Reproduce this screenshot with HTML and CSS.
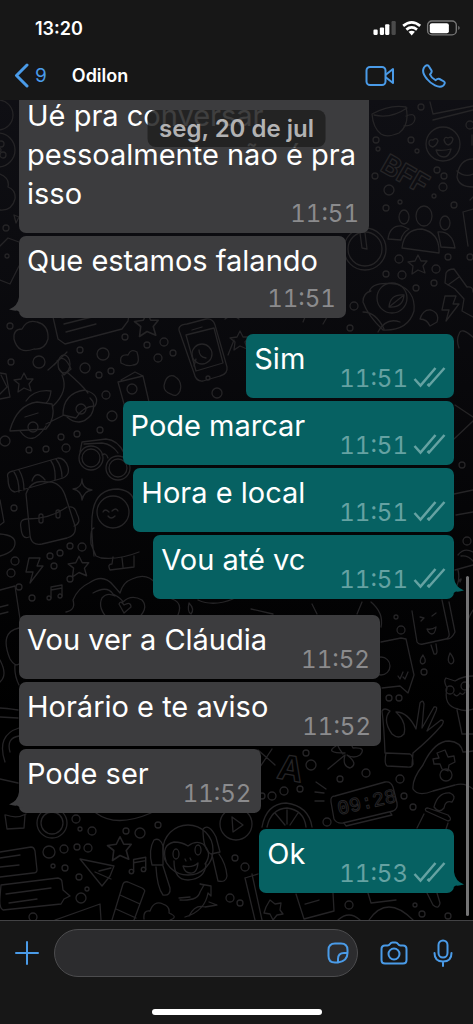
FILE: index.html
```html
<!DOCTYPE html>
<html lang="pt-BR">
<head>
<meta charset="utf-8">
<meta name="viewport" content="width=device-width, initial-scale=1">
<title>Odilon</title>
<link rel="stylesheet" href="styles.css">
</head>
<body>
<svg class="defs" aria-hidden="true">
  <symbol id="ticks" viewBox="0 0 33 22"><path d="M1.500 13l6 6.500L22.500 2M14.500 18l1.500 1.500L31.500 2" /></symbol>
  <symbol id="tail" viewBox="0 0 14 18"><path d="M14 0H10Q9 9 0 12.500Q5 14 8 13.500Q10 15 14 16z" /></symbol>
  <symbol id="star" viewBox="-12 -12 24 24"><path d="M0-9l3 6 6 0-4 5 2 7-7-3-6 4 1-8-5-4 7-1z" /></symbol>
  <symbol id="bolt" viewBox="-12 -14 24 28"><path d="M-5-12H6L3-4H9L-4 13-1 2H-8z" /></symbol>
  <symbol id="note" viewBox="-10 -10 20 20"><path d="M-4 6V-5L7-7V4M-4-2L7-4" /><circle cx="-6" cy="6" r="2" /><circle cx="5" cy="4" r="2" /></symbol>
</svg>
<div class="screen">
  <header class="top">
    <div class="status">
      <span class="clock">13:20</span>
      <svg class="status-icons" viewBox="0 0 82 16" aria-hidden="true">
        <g fill="#fff"><rect x="0" y="9" width="4" height="5" rx="1" /><rect x="6" y="7" width="4" height="7" rx="1" /><rect x="11" y="4" width="4" height="10" rx="1" /></g>
        <rect x="17" y="1" width="4" height="13" rx="1" fill="#4a4a4a" />
        <g fill="none" stroke="#fff" stroke-width="2.6"><path d="M28 5.500Q36-1 44 5.500" /><path d="M31 9Q36 5 41 9" /></g>
        <path d="M33 11Q36 9 39 11L36 14.500z" fill="#fff" />
        <rect x="51" y="1" width="27" height="13" rx="4" fill="none" stroke="#777" stroke-width="1.300" />
        <rect x="53" y="3" width="18" height="9.500" rx="2" fill="#fff" /><path d="M80 5.500q2 2 0 4z" fill="#999" />
      </svg>
    </div>
    <nav class="nav">
      <button class="back" aria-label="Voltar, 9 conversas">
        <svg width="15" height="25" viewBox="0 0 15 25"><path d="M13 2L2.500 12.500 13 23" stroke-width="3" /></svg><span>9</span>
      </button>
      <h1 class="name">Odilon</h1>
      <button class="icon" aria-label="Chamada de vídeo"><svg width="30" height="22" viewBox="0 0 30 22"><rect x="1.500" y="2" width="19" height="18" rx="3.500" /><path d="M21 9.500L28 4v14l-7-5.500" /></svg></button>
      <button class="icon" aria-label="Ligar"><svg width="24" height="24" viewBox="0 0 24 24"><path d="M2 3.500C4 1 6 .5 7 2.500l2.500 4c.8 1.500-.2 2.500-1.500 4 1 2.500 3 4.500 5.500 5.700 1.500-1.300 2.500-2 4-1.200l4.500 2.500c1.500 1 .5 3-1 4.300C17 25 9 20 5 15 1.500 11 .3 6.500 2 3.500z" /></svg></button>
    </nav>
  </header>

  <main class="chat">
    <svg class="wallpaper" viewBox="0 100 473 820" preserveAspectRatio="xMidYMin slice" aria-hidden="true">
      <g>
        <!-- top right: cup, smiley, letters, people -->
        <path d="M372 114q18-10 34-7 4 18-7 26-12 5-18 1-8-6-9-20zM374 115q17 4 33-7M406 116q9-4 9 3-1 7-11 7M430 102l3 12 40-8M433 120l40-10" />
        <circle cx="443" cy="144" r="17" /><path d="M429 143q0-4 4-3 4-3 5 1-1 4-5 6-4-1-4-4zM444 140q1-4 4-2 4-2 5 1-1 5-5 6-3-1-4-5zM436 150q8 1 15-1-2 8-7 8-6 0-8-7z" />
        <text class="letters" transform="translate(379 170) rotate(30)">BFF</text>
        <path d="M457 177q2-18 16-18M457 177q2 10 16 10M457 171q8 7 16 3" />
        <ellipse cx="424" cy="216" rx="8" ry="10" /><ellipse cx="404" cy="217" rx="5" ry="7" /><ellipse cx="445" cy="223" rx="5" ry="7" />
        <path d="M402 248q2-19 20-19 18 4 17 24zM388 239q2-14 14-13l7 3q-7 4-8 11zM438 232q14-1 17 16l-14-1zM463 212l10-3M463 212l5 34M470 200l3-3" />
        <circle cx="365" cy="249" r="21" /><circle cx="365" cy="249" r="17" /><path d="M360 233l2 15 5 1-2-16" />
        <path d="M371 291q-8 2-8 11 5 14 20 28 25 1 31-19 2-21-18-27-24-3-27 8zM363 312q13 0 21 17" /><circle cx="392" cy="298" r="15" /><path d="M389 307q1-13 15-12-1 13-15 12zl15-12" />
        <path d="M446 273q2-4 8-4l13 18q6-1 6 5M446 273l-1 10 10 6 9 10-2 12 11 6M448 285l11-8M420 319q3-10 11-9 9 3 6 12l-7 4q-3-7-10-7z" />
        <use href="#star" x="406" y="252" width="24" height="24" /><use href="#bolt" x="438" y="294" width="24" height="28" />
        <!-- left edge top -->
        <circle cx="-2" cy="115" r="15" /><circle cx="-2" cy="150" r="17" /><circle cx="1" cy="144" r="3" /><circle cx="3" cy="155" r="3" /><circle cx="-1" cy="150" r="2" /><path d="M0 174q10 4 8 13 8 3 7 12-3 12-15 11M14 215l5 2-3 6zM0 246l8-8 11 4M0 280l10 4 9-18" />
        <path d="M14 339q-1-10 8-10 5-10 15-7 12 3 11 17-3 11-14 10-16 6-20-10zM53 317l5 22 7 5 57-15 6-8 2-13M64 324l32-8M66 332l30-8M62 318l20-4" />
        <use href="#star" x="132" y="309" width="30" height="30" /><use href="#star" x="12" y="370" width="24" height="24" /><use href="#star" x="228" y="328" width="24" height="24" />
        <!-- scooter -->
        <path d="M48 370q6-5 17-16M54 365l13-13M57 361q7-8 14 8l-7 6-5-6M68 373q14 12 20 20M62 375q7 16-9 31M63 415q0-22 22-25 16 5 10 16-12 0-19 12zM10 430q7-25 27-28l15 2q4 14-6 25l-36 2zM26 401q8-12 25-10-1 9-5 12M25 417l13-4M46 424l18-9" /><ellipse cx="64" cy="364" rx="6" ry="9" />
        <path d="M67 417q13 11 24-2 6-11-1-17M20 431q12 17 26-5" /><circle cx="81" cy="409" r="5" /><circle cx="33" cy="427" r="5" />
        <path d="M121 363q-2-9 7-8 3-7 9-3 4 13-4 13-5 2-12-2zM118 382l25-6 6 26M118 382l9 33M121 380l14-8 8 4M0 373l6 1 4 23-10 2M1 375l6 12-7 7" /><circle cx="132" cy="389" r="5" />
        <path d="M180 333q-4-8 7-9l19-5q7-1 9 6l12 42q1 7-7 9l-17 5q-7 1-9-8zM186 335l28-7 9 35-27 8zM192 330l10-3" /><circle cx="202" cy="354" r="10" /><path d="M194 366l2-7M199 350q0 7 7 8" /><circle cx="208" cy="378" r="2" />
        <path d="M164 386q2-12 10-10 9 5 6 15-3 7-9 3-7-2-7-8zM474 338q-13-12-15-4-3 6 0 14M455 405l18 12M454 439l19-18" />
        <!-- sunglasses -->
        <circle cx="91" cy="458" r="12" /><circle cx="91" cy="458" r="9" /><circle cx="118" cy="468" r="12" /><circle cx="118" cy="468" r="9" /><path d="M80 452l2-10 24-3q12 1 18 14M84 444l18-1q10 1 16 10M102 455q4-3 6 3" />
        <!-- backpack -->
        <path d="M8 478q-2-6 5-7l45-13q7 0 10 9 2 8-5 11l-48 14q-7-1-7-14zM14 472q5 7 5 20M19 470q5 8 5 20M51 461q5 7 4 19M56 459q6 8 6 18M26 494q5-15 21-12 14-1 19 16l9 28q2 9-8 12l-25 6q-11 2-12-9zM27 519q23 0 40-12M69 507q6-1 8 7 5 9-3 12M27 519q-8 0-6 9 1 12 8 9M32 481q4-12 13-1" /><rect x="39" y="514" width="4" height="9" rx="2" /><rect x="56" y="510" width="4" height="8" rx="2" />
        <path d="M82 479q0 10 10 11-8 1-10 10 0-9-9-11 9-1 9-10z" />
        <!-- astronaut -->
        <path d="M94 556q-4-31-1-46 4-21 25-21 18 2 17 20M94 528q-4 1-3 16l5 12 5 2q18 2 38-6M113 557l-1 7q-5 0-2 6l24-3 0-11M122 558l1 9" /><circle cx="113" cy="512" r="16" /><path d="M103 512q2-4 6 0M112 511q4-4 6 0M108 516q3 4 7 0" />
        <path d="M0 500l4 22-4 3M0 534q15 1 15 9 0 9-15 13M0 590l15-4 5 33M0 607l8-2M0 614l8-2" />
        <use href="#bolt" x="22" y="556" width="24" height="28" /><use href="#star" x="66" y="553" width="26" height="26" /><use href="#note" x="45" y="582" width="20" height="20" />
        <path d="M66 612q10-2 7-12 5-12 16-17 14-10 24 2l7 8q3-11 12-14 15-7 24 5 12-1 16 15 12 4 5 18l-8 9M93 593q14-8 20 1 8 4 10 8 8-8 19-2 8 9-7 21l-12 9-14-10q-12-12-7-22 5-6 13-2M119 604q2-4 5 1 7-4 7 2l-7 6zM189 603q6 6 2 11-4-2-2-11M198 600q15 7 35-1" />
        <path d="M458 555q6-8 15-3M455 570l18-5M456 515l17-3M454 494l19-4M461 556q7-1 12 5M458 570q2 8-1 16M458 582q5-6 2 0" />
        <!-- right middle: ice cream, chat sticker, cat, hand -->
        <path d="M412 611l5 31q2 3 6 2l23-5q4-2 3-6l-7-33M449 602l6 30q-4 8-9 7M431 645l3 9q3 1 3-3l-1-7M420 617l4 1-3 3M432 616l4-3M427 629q5 1 9-2-1 7-4 7-3 0-5-5zM371 602q13 11 10 25M381 642l20-4 5 1 8 36-2 6-4 12-8-7-18 2M423 655q5 8-1 9-4-2 1-9zM450 653q7 9 1 11-5-2-1-11z" /><circle cx="381" cy="666" r="9" /><path d="M398 676l2 3 3-7M403 677l2 2 3-7" />
        <path d="M473 676q-10 0-18 5l-9-3q-3 3 1 10-4 18 11 21 7 3 15 0M457 710l5 24h11M473 610q-8 12-5 20" /><circle cx="450" cy="690" r="4" /><circle cx="465" cy="686" r="4" /><path d="M454 694q3 4 6-1 3 3 5-1" />
        <path d="M385 753q-1-27-3-42 2-4 8 0-8 9 2 23 7 6 12 0 3-12-8-22 12 0 20 17l4-26q3-4 4 1l-2 24 12-21q4-1 2 4l-9 20 14-11q4 0 1 5-12 14-29 28l-1 12M386 753l24 1q3 1 3 10-1 4-6 3l-20-1q-3-2-1-13z" />
        <path d="M413 789q-1-10 10-24 11-24 26-24 12 1 14 11 5 0 10-1M413 789q5 8 20 2l22-6q10-3 18 4M437 753l8-3 3 7 6-1 1 6-6 3-1 6-6-2-2-5-6 0-1-5 6-1z" /><circle cx="446" cy="775" r="6" />
        <!-- below the bubbles -->
        <text class="letters big" transform="translate(276 778) rotate(10)">A</text><path d="M258 750q15 13 17 15M260 767l12-18M343 754q-11-15 0-9 3-12 10 3 14-1 7 7-6 4-13 0 12 9 3 13-8-2-5-13l-17 14M345 753q-21 0-9-7M316 782l10 7M315 792l9 1M315 801h9" />
        <path d="M335 796q-5 0-4 6l3 17q3 5 9 4l50-12q5-2 4-8l-4-16q-2-6-8-5zM344 823l2 3 46-11-2-3" /><text class="digits" transform="translate(339 815) rotate(-13)">09:28</text>
        <path d="M434 807q4-15 16-14 7 3 2 9-7-2-8 6-5 6-10-1zM426 811l22 10q5-1 0-6l-20-7q-4 0-2 3zM424 814l-7 14M448 823l-2 6M262 827q4-23 24-24 23 3 26 24M267 827q4-18 20-19 17 2 19 19M287 810v14M275 813l10 12M298 813l-8 12" />
        <circle cx="52" cy="823" r="15" /><circle cx="52" cy="823" r="11" /><path d="M48 808l1-6 7 1v5M5 815l2 14 17-1 1-13M6 815q11 4 20-1M96 813q20 15 55 0M0 708q5 0 18 2M0 717l18 1M5 762q-9-27 14-34M10 752q-4-14 9-16M0 779l18 4M19 628q-20 4-9 31 5 8 9 5M15 665q-1 10 4 20M0 660q8 15 0 22" />
        <circle cx="236" cy="824" r="16" /><path d="M232 817l11 8-10 7z" />
        <!-- monkey -->
        <circle cx="188" cy="850" r="25" /><path d="M166 861q-5-16 8-19 8 0 14 4 8-6 15-2 10 9 2 20M174 861q0 19 14 19 17-1 18-16M183 866q10 2 15-3-1 11-8 10-5 0-7-7zM185 859l1 2M190 858l1 2" /><ellipse cx="176" cy="854" rx="3" ry="5" /><ellipse cx="198" cy="850" rx="3" ry="5" /><path d="M163 846q-3-9-9-6-6 10-2 25l11 0zM156 867q1 20 7 28 8 1 7-7l-7-22M203 829q6-6 13 8l4 15-9 2q-8-4-8-25M212 855l6 26q8 2 9-5-1-12-8-22" />
        <use href="#star" x="105" y="833" width="30" height="30" /><use href="#note" x="127" y="854" width="22" height="22" /><path d="M80 859l34 7-4 10-8 10zM95 872l16 7M99 871l12-3" />
        <path d="M0 852l31-5q3 0 4 4l2 19q0 3-4 3l-33 4M0 858l20-3M0 867l19-2M1 885l57-7q4 1 4 4l1 8 7 6-6 3-3 5-58 6q-4-2-3-13zM6 894l45-6M9 903l28-4M55 920l45-16 1 16M112 920l11-36q1-3 5-2l14 6q4 2 2 5l-10 27M120 895l20 9M116 909l20 9M180 900q18 1 20-8l4-7-4-1 11 2v10l-3-3q-3 18-23 24M179 898l11-1M189 916q6-12 16-9l12-2-8-3M144 919q-1-9 6-8 4-11 13-7 7 2 6 9 10 4 1 7M245 878l10 42M252 874l10 46M258 874l-13 4M296 894l8 25 30-8-1-18M305 904l14-4M368 893l3 10 25-3M427 893l6 12q6 5 7-2l-3-10M369 920q18-26 44 0M338 920q11-10 22 0" />
        <path d="M266 907l4-7 5 4 6-1-1 7 3 4-6 1-4 5-3-6-6-1z" />
        <!-- outlines between the groups -->
        <path d="M69 308q10-8 16 4M225 319q7-6 14 0M303 322l4-10 7 2M323 324l7-12 4 4M378 332q8-15 22-10M362 602l-5 12M312 604l5 10M251 609l22 5M234 340l-6 15M472 145v-10" />
      </g>
      <g class="dots">
        <circle cx="421" cy="107" r="3" /><circle cx="376" cy="140" r="3" /><circle cx="411" cy="140" r="3" /><circle cx="417" cy="151" r="2" /><circle cx="378" cy="149" r="2" /><circle cx="389" cy="190" r="5" /><circle cx="443" cy="187" r="4" /><circle cx="437" cy="170" r="3" /><circle cx="444" cy="176" r="3" /><circle cx="434" cy="196" r="2" /><circle cx="375" cy="176" r="3" /><circle cx="386" cy="208" r="3" /><circle cx="400" cy="202" r="2" /><circle cx="454" cy="205" r="3" /><circle cx="470" cy="125" r="4" /><circle cx="399" cy="259" r="4" /><circle cx="386" cy="274" r="3" /><circle cx="402" cy="275" r="4" /><circle cx="436" cy="269" r="4" /><circle cx="448" cy="257" r="3" /><circle cx="416" cy="288" r="3" /><circle cx="434" cy="283" r="3" /><circle cx="354" cy="306" r="4" /><circle cx="350" cy="328" r="3" /><circle cx="470" cy="257" r="3" />
        <circle cx="6" cy="228" r="3" /><circle cx="7" cy="256" r="2" /><circle cx="10" cy="326" r="3" /><circle cx="39" cy="362" r="6" /><circle cx="11" cy="362" r="3" /><circle cx="80" cy="350" r="3" /><circle cx="103" cy="354" r="6" /><circle cx="85" cy="368" r="5" /><circle cx="99" cy="375" r="3" /><circle cx="111" cy="371" r="3" /><circle cx="125" cy="337" r="3" /><circle cx="147" cy="345" r="3" /><circle cx="164" cy="342" r="4" /><circle cx="158" cy="358" r="4" /><circle cx="173" cy="353" r="3" /><circle cx="106" cy="395" r="4" /><circle cx="112" cy="416" r="5" /><circle cx="217" cy="393" r="5" /><circle cx="5" cy="441" r="5" /><circle cx="29" cy="450" r="3" /><circle cx="46" cy="449" r="3" /><circle cx="66" cy="448" r="4" /><circle cx="61" cy="437" r="3" /><circle cx="77" cy="434" r="3" /><circle cx="100" cy="430" r="3" /><circle cx="14" cy="508" r="3" /><circle cx="70" cy="546" r="3" /><circle cx="82" cy="547" r="4" /><circle cx="15" cy="561" r="4" /><circle cx="11" cy="573" r="4" /><circle cx="50" cy="556" r="3" /><circle cx="60" cy="553" r="3" /><circle cx="54" cy="566" r="3" /><circle cx="70" cy="579" r="3" /><circle cx="32" cy="598" r="3" /><circle cx="19" cy="587" r="3" />
        <circle cx="462" cy="465" r="3" /><circle cx="467" cy="541" r="4" /><circle cx="396" cy="617" r="2" /><circle cx="401" cy="630" r="4" /><circle cx="389" cy="698" r="3" /><circle cx="399" cy="698" r="3" /><circle cx="424" cy="672" r="3" /><circle cx="306" cy="753" r="3" /><circle cx="311" cy="765" r="5" /><circle cx="366" cy="773" r="4" /><circle cx="340" cy="779" r="3" /><circle cx="400" cy="779" r="4" /><circle cx="284" cy="791" r="4" /><circle cx="272" cy="796" r="4" /><circle cx="262" cy="796" r="3" /><circle cx="300" cy="789" r="3" /><circle cx="404" cy="796" r="3" /><circle cx="413" cy="807" r="3" /><circle cx="327" cy="822" r="4" />
        <circle cx="76" cy="819" r="4" /><circle cx="80" cy="829" r="2" /><circle cx="92" cy="831" r="4" /><circle cx="140" cy="833" r="5" /><circle cx="126" cy="831" r="3" /><circle cx="158" cy="825" r="3" /><circle cx="49" cy="852" r="6" /><circle cx="64" cy="849" r="4" /><circle cx="77" cy="847" r="3" /><circle cx="88" cy="848" r="4" /><circle cx="53" cy="866" r="2" /><circle cx="65" cy="868" r="3" /><circle cx="79" cy="877" r="3" /><circle cx="81" cy="898" r="5" /><circle cx="87" cy="889" r="2" /><circle cx="235" cy="858" r="3" /><circle cx="245" cy="867" r="4" /><circle cx="230" cy="898" r="4" /><circle cx="240" cy="903" r="3" /><circle cx="349" cy="905" r="4" /><circle cx="415" cy="905" r="2" /><circle cx="422" cy="914" r="3" /><circle cx="448" cy="916" r="3" /><circle cx="33" cy="917" r="4" />
      </g>
    </svg>

    <section class="group in">
      <article class="bubble wrap"><p>Ué pra conversar pessoalmente não é pra isso</p><div class="meta"><time>11:51</time></div></article>
      <article class="bubble stacked"><p>Que estamos falando</p><div class="meta"><time>11:51</time></div><svg class="tail"><use href="#tail" /></svg></article>
    </section>
    <section class="group out">
      <article class="bubble"><p>Sim</p><div class="meta"><time>11:51</time><svg class="ticks"><use href="#ticks" /></svg></div></article>
      <article class="bubble"><p>Pode marcar</p><div class="meta"><time>11:51</time><svg class="ticks"><use href="#ticks" /></svg></div></article>
      <article class="bubble"><p>Hora e local</p><div class="meta"><time>11:51</time><svg class="ticks"><use href="#ticks" /></svg></div></article>
      <article class="bubble"><p>Vou até vc</p><div class="meta"><time>11:51</time><svg class="ticks"><use href="#ticks" /></svg></div><svg class="tail"><use href="#tail" /></svg></article>
    </section>
    <section class="group in">
      <article class="bubble"><p>Vou ver a Cláudia</p><div class="meta"><time>11:52</time></div></article>
      <article class="bubble"><p>Horário e te aviso</p><div class="meta"><time>11:52</time></div></article>
      <article class="bubble"><p>Pode ser</p><div class="meta"><time>11:52</time></div><svg class="tail"><use href="#tail" /></svg></article>
    </section>
    <section class="group out">
      <article class="bubble"><p>Ok</p><div class="meta"><time>11:53</time><svg class="ticks"><use href="#ticks" /></svg></div><svg class="tail"><use href="#tail" /></svg></article>
    </section>
    <div class="date">seg, 20 de jul</div>
    <div class="scrollbar"></div>
  </main>

  <footer class="bottom">
    <form class="composer">
      <button type="button" class="icon" aria-label="Anexar"><svg width="24" height="24" viewBox="0 0 24 24"><path d="M12 1v22M1 12h22" /></svg></button>
      <div class="field">
        <input type="text" aria-label="Mensagem">
        <button type="button" class="icon" aria-label="Figurinhas"><svg width="22" height="22" viewBox="0 0 22 22"><path d="M20.500 11V8Q20.500 1.500 14 1.500H8Q1.500 1.500 1.500 8v6Q1.500 20.500 8 20.500h3Q20.500 19 20.500 11H17q-6 0-6 6v3.500" /></svg></button>
      </div>
      <button type="button" class="icon camera" aria-label="Câmera"><svg width="28" height="24" viewBox="0 0 28 24"><path d="M5 4.500h2.500Q9 4.500 10 3t2.500-1.500h3Q17 1.500 18 3t2.500 1.500H23q3.500 0 3.500 3.500v11q0 3.500-3.500 3.500H5q-3.500 0-3.500-3.500V8Q1.500 4.500 5 4.500z" /><circle cx="14" cy="13" r="5.500" /></svg></button>
      <button type="button" class="icon" aria-label="Gravar áudio"><svg width="20" height="28" viewBox="0 0 20 28"><rect x="5.500" y="1.500" width="9" height="17" rx="4.500" /><path d="M1.500 14q0 8.500 8.500 8.500t8.500-8.500M10 22.500V27" /></svg></button>
    </form>
    <div class="home"></div>
  </footer>
</div>
</body>
</html>
```
FILE: styles.css
```css
* { box-sizing: border-box; }
body { margin: 0; background: #171717; color: #fff; font-family: Inter, "Liberation Sans", sans-serif; }
h1, p { margin: 0; font-weight: 400; }
button { border: 0; padding: 0; background: none; color: #4a9be8; font: inherit; display: flex; align-items: center; }
button svg { fill: none; stroke: currentColor; stroke-width: 2; stroke-linecap: round; stroke-linejoin: round; }
.defs { position: absolute; width: 0; height: 0; }
.screen { height: 100vh; display: flex; flex-direction: column; }

.top { flex: none; height: 100px; background: #171717; }
.status { display: flex; align-items: center; justify-content: space-between; padding: 16px 12px 0 35px; height: 41px; }
.clock { font-size: 18px; line-height: 24px; font-weight: 600; }
.status-icons { width: 88px; height: 17px; }
.nav { display: flex; align-items: center; padding: 0 27px 0 14px; height: 69px; }
.back { gap: 6px; font-size: 19px; }
.name { flex: 1; margin-left: 25px; font-size: 18px; line-height: 24px; font-weight: 600; }
.nav .icon + .icon { margin-left: 27px; }

.chat { flex: 1; min-height: 0; position: relative; overflow: hidden; display: flex; flex-direction: column; justify-content: flex-end; gap: 16px; padding: 0 19px 27px; background: linear-gradient(#0f0f14, #08080b 35%, #000 75%); }
.wallpaper { position: absolute; inset: 0; width: 100%; height: 100%; fill: none; stroke: #252426; stroke-width: 1.3; stroke-linecap: round; stroke-linejoin: round; }
.letters { font: 700 27px Inter, sans-serif; }
.letters.big { font-size: 34px; }
.digits { font: 400 20px "Liberation Mono", monospace; stroke-width: 1; }

.group { position: relative; display: flex; flex-direction: column; gap: 3px; }
.in { align-items: flex-start; }
.out { align-items: flex-end; }
.bubble { position: relative; display: flex; align-items: flex-end; gap: 34px; padding: 5px 10px 5px 8px; border-radius: 7px; background: #3c3c3e; color: #fff; }
.bubble p { margin-bottom: 15px; font-size: 29px; line-height: 39px; }
.out .bubble { padding-right: 8px; background: #066162; }
.meta { display: flex; align-items: flex-start; gap: 5px; color: #8b8b8d; font-size: 24px; line-height: 28px; font-variant-numeric: tabular-nums; }
.out .meta { color: #65a2a2; }
.wrap { display: grid; max-width: 350px; }
.wrap p, .wrap .meta { grid-area: 1 / 1; }
.wrap .meta { align-self: end; justify-self: end; }
.stacked { flex-direction: column; gap: 5px; padding-right: 10px; }
.stacked p { margin: 0 18px 0 0; }
.ticks { width: 33px; height: 22px; margin-top: 1px; fill: none; stroke: currentColor; stroke-width: 2.5; }
.tail { position: absolute; left: -10px; bottom: 3px; width: 14px; height: 18px; fill: #3c3c3e; }
.out .tail { left: auto; right: -10px; fill: #066162; transform: scaleX(-1); }

.date { position: absolute; top: 10px; left: 50%; transform: translateX(-50%); padding: 4px 12px; border-radius: 8px; background: rgba(31, 31, 32, .86); color: #b2b2b3; font-size: 24px; line-height: 29px; font-weight: 600; white-space: nowrap; }
.scrollbar { position: absolute; right: 4px; top: 476px; bottom: 4px; width: 3px; border-radius: 2px; background: #747475; }

.bottom { flex: none; height: 104px; border-top: 1px solid #424244; background: #171717; display: flex; flex-direction: column; align-items: center; justify-content: space-between; padding: 8px 0 9px; }
.composer { display: flex; align-items: center; width: 100%; padding: 0 20px 0 15px; }
.field { flex: 1; min-width: 0; display: flex; align-items: center; height: 48px; margin: 0 22px 0 15px; padding: 0 8px 0 20px; border: 1px solid #4c4c4e; border-radius: 24px; background: #2c2c2e; }
.field input { flex: 1; min-width: 0; border: 0; outline: 0; background: none; color: #fff; font: inherit; font-size: 24px; }
.camera { margin-right: 25px; }
.home { width: 170px; height: 6px; border-radius: 3px; background: #fff; }
```
